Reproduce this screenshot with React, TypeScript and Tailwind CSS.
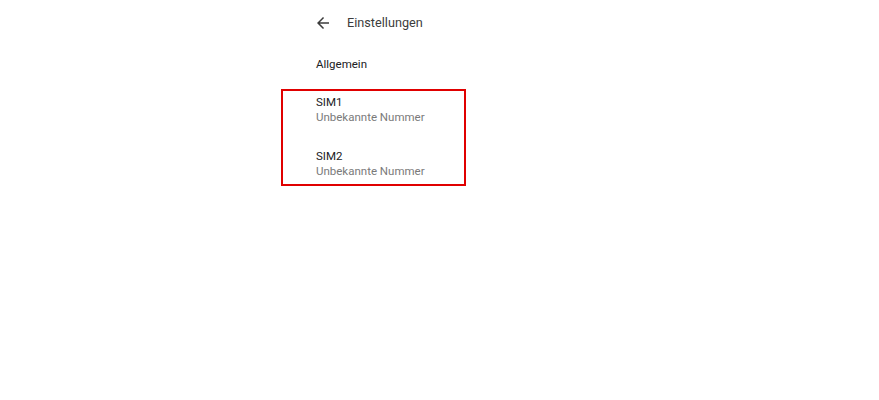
const sims = ['SIM1', 'SIM2'];

const BackArrow = () => (
  <svg viewBox="0 0 24 24" className="w-[18px] h-[18px] fill-[#3c3c3c]">
    <path d="M20 11H7.83l5.59-5.59L12 4l-8 8 8 8 1.41-1.41L7.83 13H20v-2z" />
  </svg>
);

export default function App() {
  return (
    <div className="w-[879px] h-[400px] bg-white font-['Roboto',sans-serif]">
      <div className="ml-[281px] w-[185px]">
        {/* Header */}
        <div className="flex items-center h-[18px] mt-[14px] pl-[33px]">
          <BackArrow />
          <span className="ml-[15px] text-[12.7px] leading-[16px] text-[#3c3c3c]">Einstellungen</span>
        </div>

        {/* Section */}
        <div className="pl-[35px] mt-[25px] text-[11.5px] leading-[15px] text-[#202124]">Allgemein</div>

        {/* SIM list */}
        <div className="mt-[17px] border-2 border-[#e00000] pl-[33px] pt-[4px] pb-[5px]">
          {sims.map((sim, i) => (
            <div key={sim} className={i > 0 ? 'mt-[24px]' : ''}>
              <div className="text-[11.5px] leading-[15px] text-[#202124]">{sim}</div>
              <div className="text-[11.5px] leading-[15px] text-[#7a7a7a]">Unbekannte Nummer</div>
            </div>
          ))}
        </div>
      </div>
    </div>
  );
}
